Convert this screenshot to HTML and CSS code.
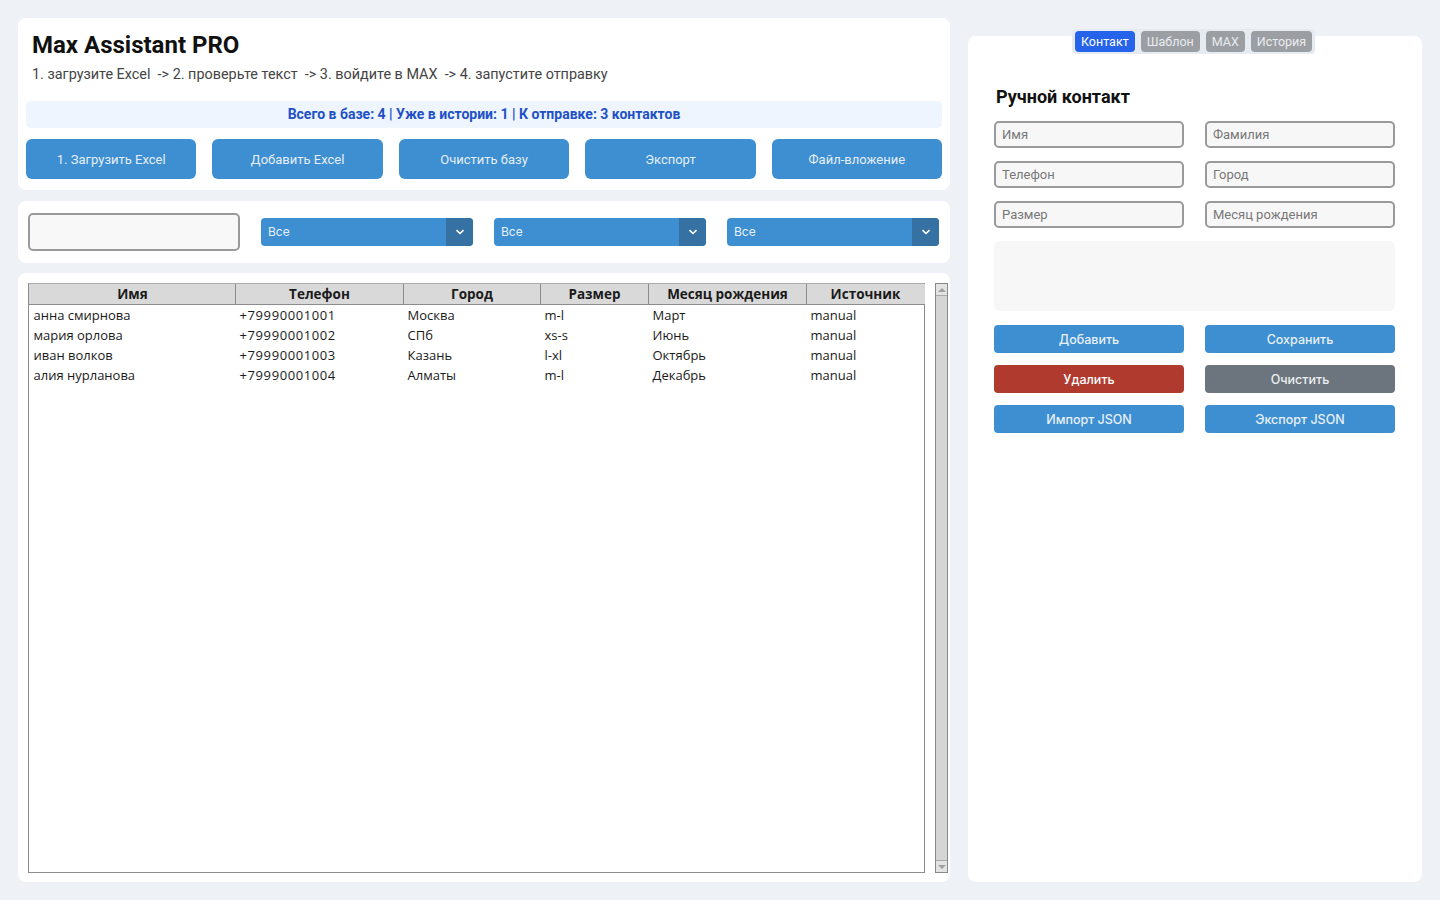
FILE: index.html
```html
<!DOCTYPE html>
<html lang="ru">
<head>
    <meta charset="UTF-8">
    <title>Max Assistant PRO</title>
    <link rel="stylesheet" href="styles.css">
</head>
<body>
    <div class="app">
        <div class="left">
            <div class="card header-card">
                <h1>Max Assistant PRO</h1>
                <p class="steps">1. загрузите Excel&nbsp; -&gt; 2. проверьте текст&nbsp; -&gt; 3. войдите в MAX&nbsp; -&gt; 4. запустите отправку</p>
                <div class="stats">Всего в базе: 4 | Уже в истории: 1 | К отправке: 3 контактов</div>
                <div class="actions">
                    <button class="btn">1. Загрузить Excel</button>
                    <button class="btn">Добавить Excel</button>
                    <button class="btn">Очистить базу</button>
                    <button class="btn">Экспорт</button>
                    <button class="btn">Файл-вложение</button>
                </div>
            </div>

            <div class="card filters">
                <input type="text" class="search">
                <div class="select"><span>Все</span><i class="arrow"><svg width="10" height="6" viewBox="0 0 10 6"><path d="M1.5 1.2 5 4.5 8.5 1.2" fill="none" stroke="#fff" stroke-width="1.6"/></svg></i></div>
                <div class="select"><span>Все</span><i class="arrow"><svg width="10" height="6" viewBox="0 0 10 6"><path d="M1.5 1.2 5 4.5 8.5 1.2" fill="none" stroke="#fff" stroke-width="1.6"/></svg></i></div>
                <div class="select"><span>Все</span><i class="arrow"><svg width="10" height="6" viewBox="0 0 10 6"><path d="M1.5 1.2 5 4.5 8.5 1.2" fill="none" stroke="#fff" stroke-width="1.6"/></svg></i></div>
            </div>

            <div class="card table-card">
                <div class="table-wrap">
                    <table>
                        <colgroup>
                            <col class="c-name"><col class="c-phone"><col class="c-city"><col class="c-size"><col class="c-month"><col class="c-src">
                        </colgroup>
                        <thead>
                            <tr>
                                <th>Имя</th>
                                <th>Телефон</th>
                                <th>Город</th>
                                <th>Размер</th>
                                <th>Месяц рождения</th>
                                <th>Источник</th>
                            </tr>
                        </thead>
                        <tbody>
                            <tr><td>анна смирнова</td><td class="num">+79990001001</td><td>Москва</td><td>m-l</td><td>Март</td><td>manual</td></tr>
                            <tr><td>мария орлова</td><td class="num">+79990001002</td><td>СПб</td><td>xs-s</td><td>Июнь</td><td>manual</td></tr>
                            <tr><td>иван волков</td><td class="num">+79990001003</td><td>Казань</td><td>l-xl</td><td>Октябрь</td><td>manual</td></tr>
                            <tr><td>алия нурланова</td><td class="num">+79990001004</td><td>Алматы</td><td>m-l</td><td>Декабрь</td><td>manual</td></tr>
                        </tbody>
                    </table>
                </div>
                <div class="scrollbar">
                    <div class="sb-btn up"></div>
                    <div class="sb-track"></div>
                    <div class="sb-btn down"></div>
                </div>
            </div>
        </div>

        <div class="right">
            <div class="tabs">
                <span class="tab active">Контакт</span>
                <span class="tab">Шаблон</span>
                <span class="tab">MAX</span>
                <span class="tab">История</span>
            </div>
            <div class="card side-card">
                <h2>Ручной контакт</h2>
                <div class="form-grid">
                    <input type="text" placeholder="Имя">
                    <input type="text" placeholder="Фамилия">
                    <input type="text" placeholder="Телефон">
                    <input type="text" placeholder="Город">
                    <input type="text" placeholder="Размер">
                    <input type="text" placeholder="Месяц рождения">
                </div>
                <textarea class="note"></textarea>
                <div class="form-grid buttons">
                    <button class="sbtn">Добавить</button>
                    <button class="sbtn">Сохранить</button>
                    <button class="sbtn danger">Удалить</button>
                    <button class="sbtn muted">Очистить</button>
                    <button class="sbtn">Импорт JSON</button>
                    <button class="sbtn">Экспорт JSON</button>
                </div>
            </div>
        </div>
    </div>
</body>
</html>
```
FILE: styles.css
```css
body {
    margin: 0;
    background: #eef1f6;
    font-family: Roboto, "Noto Sans", sans-serif;
    color: #1a1a1a;
}
.app {
    display: flex;
    gap: 18px;
    padding: 18px;
    height: 864px;
}
.left {
    width: 932px;
    display: flex;
    flex-direction: column;
    gap: 10px;
}
.card {
    background: #fff;
    border-radius: 8px;
}
.header-card {
    padding: 12px 8px 11px 8px;
}
h1 {
    margin: 0 0 0 6px;
    font-size: 24px;
    font-weight: 700;
    color: #111;
    line-height: 30px;
}
.steps {
    margin: 6px 0 0 6px;
    font-size: 14.4px;
    color: #444;
    line-height: 18px;
}
.stats {
    margin-top: 17px;
    height: 27px;
    line-height: 27px;
    background: #eef5ff;
    border-radius: 5px;
    text-align: center;
    color: #2150c6;
    font-weight: 700;
    font-size: 14px;
}
.actions {
    display: flex;
    gap: 16px;
    margin-top: 11px;
}
.btn {
    flex: 1;
    height: 40px;
    border: none;
    border-radius: 6px;
    background: #3d8fd1;
    color: #e6eef7;
    font-family: Roboto, sans-serif;
    font-size: 13px;
}
.filters {
    margin-top: 1px;
    height: 62px;
    display: flex;
    align-items: center;
    padding: 0 11px 0 10px;
    gap: 21px;
}
.search {
    width: 212px;
    height: 38px;
    box-sizing: border-box;
    border: 2px solid #9a9a9a;
    border-radius: 5px;
    background: #f8f8f8;
}
.select {
    flex: 1;
    height: 28px;
    display: flex;
    background: #3d8fd1;
    border-radius: 4px;
    overflow: hidden;
    color: #e8f0f8;
    font-family: Inter, sans-serif;
    font-size: 12px;
}
.select span {
    flex: 1;
    line-height: 28px;
    padding-left: 7px;
}
.arrow {
    width: 27px;
    background: #3571a3;
    display: flex;
    align-items: center;
    justify-content: center;
}
.table-card {
    flex: 1;
    display: flex;
    padding: 10px 2px 9px 10px;
    gap: 10px;
}
.table-wrap {
    width: 895px;
    border: 1px solid #8c8c8c;
    border-top-color: #aaa;
    background: #fff;
}
table {
    border-collapse: collapse;
    font-family: "Open Sans", sans-serif;
    font-size: 13px;
    width: 895px;
    table-layout: fixed;
}
th {
    background: #d9d9d9;
    font-weight: 700;
    font-size: 13.5px;
    height: 20px;
    padding: 0;
    border: 1px solid #8c8c8c;
    border-top: none;
    line-height: 20px;
}
th:first-child { border-left: 1px solid #d9d9d9; }
th:last-child { border-right: 1px solid #d9d9d9; }
td {
    height: 20px;
    padding: 0 0 0 4px;
    line-height: 20px;
    white-space: nowrap;
}
td.num { letter-spacing: 0.6px; }
.c-name { width: 206px; }
.c-phone { width: 168px; }
.c-city { width: 137px; }
.c-size { width: 108px; }
.c-month { width: 158px; }
.c-src { width: 118px; }
.scrollbar {
    width: 12px;
    display: flex;
    flex-direction: column;
    border: 1px solid #888;
    background: #d9d9d9;
}
.sb-btn {
    height: 11px;
    background: #e3e3e3;
    display: flex;
    justify-content: center;
    align-items: center;
}
.sb-btn.up::after {
    content: "";
    border: 4px solid transparent;
    border-bottom: 4px solid #a0a0a0;
    border-top: none;
}
.sb-btn.down::after {
    content: "";
    border: 4px solid transparent;
    border-top: 4px solid #a0a0a0;
    border-bottom: none;
}
.sb-track {
    flex: 1;
    background: #d5d5d5;
    border-top: 1px solid #aaa;
    border-bottom: 1px solid #aaa;
}
.right {
    width: 454px;
    position: relative;
    padding-top: 18px;
}
.tabs {
    position: absolute;
    top: 11px;
    left: 104px;
    display: flex;
    gap: 6px;
    padding: 2px 3px;
    background: #e6ebf2;
    border-radius: 4px;
}
.tab {
    background: #9b9ea3;
    color: #e9ecef;
    font-size: 12.5px;
    padding: 0 6px;
    height: 21px;
    line-height: 21px;
    border-radius: 4px;
}
.tab.active {
    background: #2563eb;
    color: #fff;
}
.side-card {
    height: 846px;
    box-sizing: border-box;
    padding: 51px 27px 0 26px;
}
h2 {
    margin: 0 0 14px 2px;
    font-size: 18px;
    font-weight: 700;
    color: #111;
    line-height: 20px;
}
.form-grid {
    display: grid;
    grid-template-columns: 190px 190px;
    column-gap: 21px;
    row-gap: 13px;
}
.form-grid.buttons {
    row-gap: 12px;
}
.form-grid input {
    height: 27px;
    box-sizing: border-box;
    border: 2px solid #9a9a9a;
    border-radius: 5px;
    background: #f7f7f7;
    padding: 0 6px;
    font-family: Roboto, sans-serif;
    font-size: 13px;
}
.form-grid input::placeholder { color: #777; }
.note {
    display: block;
    width: 401px;
    height: 70px;
    box-sizing: border-box;
    margin: 13px 0 14px 0;
    border: none;
    border-radius: 6px;
    background: #f7f7f7;
    resize: none;
}
.sbtn {
    height: 28px;
    border: none;
    border-radius: 4px;
    background: #3d8fd1;
    color: #e8eff7;
    font-family: Inter, sans-serif;
    font-size: 12.5px;
    font-weight: 500;
}
.sbtn.danger { background: #b03a2e; color: #fff; }
.sbtn.muted { background: #6c757d; color: #eceff1; }
```
